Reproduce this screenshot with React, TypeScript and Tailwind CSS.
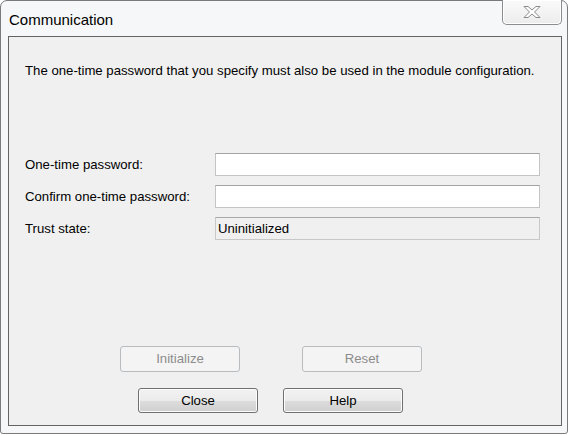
export default function App() {
  const font = { fontFamily: '"Liberation Sans", Arial, sans-serif' };

  return (
    <div className="w-[570px] h-[436px] bg-white overflow-hidden" style={font}>
      <div className="relative w-[568px] h-[434px] rounded-t-[7px] rounded-b-[3px] border border-[#7a7a7a] bg-[#f6f7f8] flex flex-col">
        {/* title bar */}
        <div className="h-[35px] flex items-start justify-between pl-[8px] pr-[5px]">
          <span className="mt-[10px] text-[15px] leading-[17px] text-black">Communication</span>
          <button className="w-[60px] h-[25px] -mt-px flex items-center justify-center rounded-b-[5px] border border-t-0 border-[#8c8c8c] bg-gradient-to-b from-[#fafafa] to-[#ececec] shadow-[inset_0_0_0_1px_#ffffff]">
            <svg width="20" height="14" viewBox="0 0 20 14" aria-hidden="true">
              <path
                d="M2 1.5h4l4 3.5 4-3.5h4l-5.5 5.5 5.5 5.5h-4l-4-3.5-4 3.5h-4l5.5-5.5z"
                fill="#ffffff"
                stroke="#8a8a8a"
                strokeWidth="1"
                strokeLinejoin="round"
              />
            </svg>
          </button>
        </div>

        {/* client area */}
        <div className="ml-[7px] w-[554px] h-[390px] border border-[#646464] bg-[#f0f0f0] flex flex-col text-[13.2px] text-black">
          <p className="mt-[26px] pl-[16px] leading-[15px]">
            The one-time password that you specify must also be used in the module configuration.
          </p>

          <div className="mt-[75px] pl-[16px] pr-[21px] grid grid-cols-[190px_1fr] gap-y-[9px] items-center">
            <label className="leading-[15px]">One-time password:</label>
            <input
              type="password"
              className="h-[23px] bg-white border border-[#c4c4c4] border-t-[#a3a3a3] outline-none"
            />
            <label className="leading-[15px]">Confirm one-time password:</label>
            <input
              type="password"
              className="h-[23px] bg-white border border-[#c4c4c4] border-t-[#a3a3a3] outline-none"
            />
            <label className="leading-[15px]">Trust state:</label>
            <div className="h-[23px] flex items-center pl-[2px] border border-[#c8c8c8] border-t-[#a8a8a8] bg-[#f0f0f0]">
              Uninitialized
            </div>
          </div>

          <div className="mt-[106px] flex pl-[111px] gap-[62px]">
            <button className="w-[120px] h-[26px] rounded-[3px] border border-[#b8bcbf] bg-[#f4f4f4] text-[#8c8c8c]">
              Initialize
            </button>
            <button className="w-[120px] h-[26px] rounded-[3px] border border-[#b8bcbf] bg-[#f4f4f4] text-[#8c8c8c]">
              Reset
            </button>
          </div>

          <div className="mt-[16px] flex pl-[129px] gap-[25px]">
            <button className="w-[120px] h-[25px] rounded-[3px] border border-[#707070] bg-[linear-gradient(#f2f2f2_0%,#ebebeb_50%,#dddddd_51%,#cfcfcf_100%)] shadow-[inset_0_0_0_1px_#fcfcfc]">
              Close
            </button>
            <button className="w-[120px] h-[25px] rounded-[3px] border border-[#707070] bg-[linear-gradient(#f2f2f2_0%,#ebebeb_50%,#dddddd_51%,#cfcfcf_100%)] shadow-[inset_0_0_0_1px_#fcfcfc]">
              Help
            </button>
          </div>
        </div>
      </div>
    </div>
  );
}
